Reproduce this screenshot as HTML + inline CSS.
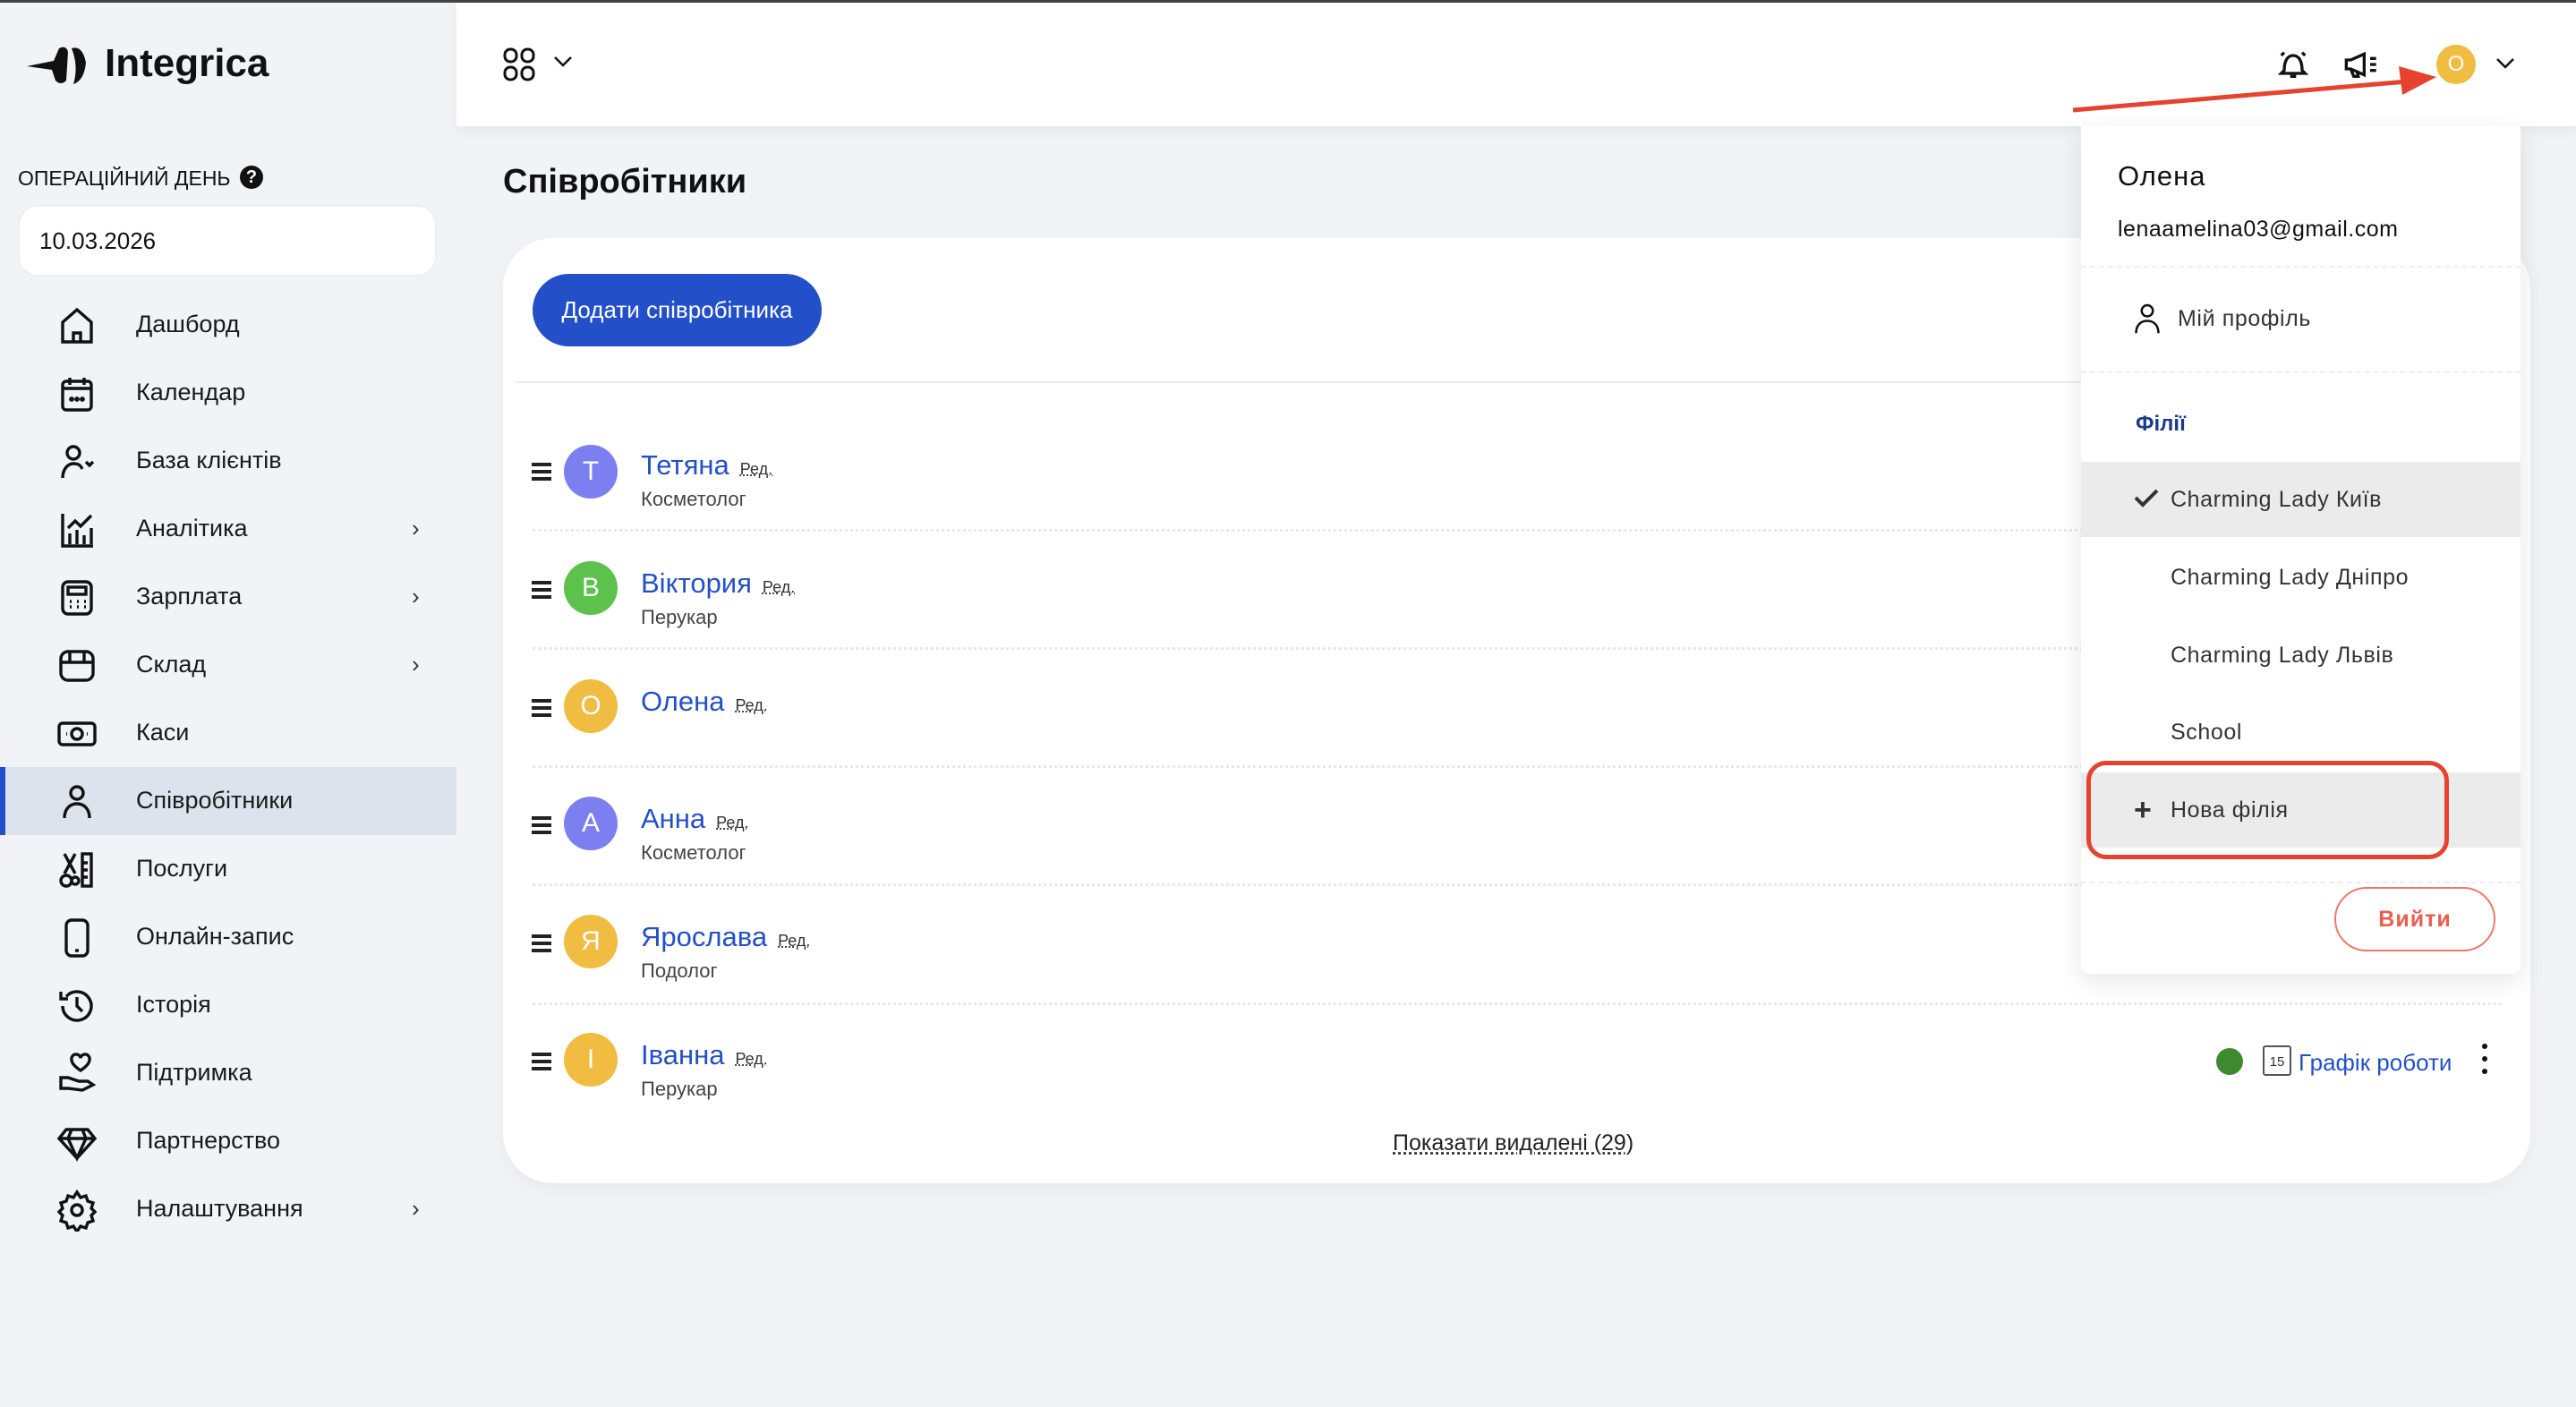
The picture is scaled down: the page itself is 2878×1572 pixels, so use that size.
<!DOCTYPE html>
<html><head><meta charset="utf-8"><style>
*{margin:0;padding:0;box-sizing:border-box}
body{width:2878px;height:1572px;background:#f2f3f7;font-family:"Liberation Sans",sans-serif;position:relative;overflow:hidden;color:#111}
.a{position:absolute;white-space:nowrap}
.topline{left:0;top:0;width:2878px;height:3px;background:#444}
.header{left:510px;top:3px;width:2368px;height:138px;background:#fff;box-shadow:0 6px 14px rgba(0,0,0,.05)}
.nav{font-size:27px;color:#1a1a1a}
.navi{left:62px;width:48px;height:48px}
.chev{left:460px;font-size:26px;color:#333}
.row-name{font-size:31px;color:#2350c8}
.red{font-size:18px;color:#333;text-decoration:underline dotted;margin-left:12px}
.sub{font-size:22px;color:#444}
.ham{left:594px;width:22px}
.ham i{display:block;height:4px;background:#222;margin:4px 0}
.av{width:60px;height:60px;border-radius:50%;color:#fff;font-size:30px;text-align:center;line-height:60px}
.div{left:595px;width:2200px;border-top:3px dotted #e6e8ee}
.dd{font-size:25px;color:#333;letter-spacing:0.6px}
</style></head><body>
<div class="a topline"></div>
<div class="a header"></div>

<!-- logo -->
<svg class="a" style="left:30px;top:50px" width="76" height="46" viewBox="0 0 76 46"><path d="M0 24 L30 18 L36 4 Q44 0 46 8 L44 40 Q38 46 32 40 L28 28 Z" fill="#111"/><path d="M50 4 Q62 0 66 20 Q64 40 52 44 Q58 24 50 4Z" fill="#111"/></svg>
<div class="a" style="left:117px;top:46px;font-size:44px;font-weight:bold;color:#111">Integrica</div>

<div class="a" style="left:20px;top:186px;font-size:23px;color:#111">ОПЕРАЦІЙНИЙ ДЕНЬ</div>
<div class="a" style="left:268px;top:185px;width:26px;height:26px;border-radius:50%;background:#111;color:#fff;font-size:20px;font-weight:bold;text-align:center;line-height:26px">?</div>
<div class="a" style="left:20px;top:229px;width:468px;height:80px;background:#fff;border-radius:22px;border:2px solid #eceef2;font-size:26px;line-height:76px;padding-left:22px">10.03.2026</div>

<div class="a" style="left:0;top:857px;width:510px;height:76px;background:#dde3ec"></div>
<div class="a" style="left:0;top:857px;width:6px;height:76px;background:#2350c8"></div>

<!-- nav -->
<svg class="a navi" style="top:340px" viewBox="0 0 24 24" fill="none" stroke="#111" stroke-width="1.7"><path d="M4 21V10L12 3l8 7v11z M10 21v-5h4v5"/></svg>
<div class="a nav" style="left:152px;top:347px">Дашборд</div>
<svg class="a navi" style="top:416px" viewBox="0 0 24 24" fill="none" stroke="#111" stroke-width="1.7"><rect x="4" y="5" width="16" height="16" rx="2"/><path d="M4 9h16M8 3v4M16 3v4"/><circle cx="9" cy="15" r=".6" fill="#111"/><circle cx="12" cy="15" r=".6" fill="#111"/><circle cx="15" cy="15" r=".6" fill="#111"/></svg>
<div class="a nav" style="left:152px;top:423px">Календар</div>
<svg class="a navi" style="top:492px" viewBox="0 0 24 24" fill="none" stroke="#111" stroke-width="1.7"><circle cx="10" cy="7" r="3.5"/><path d="M4 21c0-5 3-8 6-8s4 1 5 3"/><path d="M17 12l2 2 2-2" /></svg>
<div class="a nav" style="left:152px;top:499px">База клієнтів</div>
<svg class="a navi" style="top:568px" viewBox="0 0 24 24" fill="none" stroke="#111" stroke-width="1.7"><path d="M4 3v18h17M8 20v-6M12 20v-8M16 20v-5M20 20v-9M7 11l4-4 3 3 6-6"/></svg>
<div class="a nav" style="left:152px;top:575px">Аналітика</div><div class="a chev" style="top:575px">›</div>
<svg class="a navi" style="top:644px" viewBox="0 0 24 24" fill="none" stroke="#111" stroke-width="1.7"><rect x="4" y="3" width="16" height="18" rx="3"/><rect x="7" y="6" width="10" height="4"/><path d="M8 14h1M12 14h1M16 14h1M8 17h1M12 17h1M16 17h1"/></svg>
<div class="a nav" style="left:152px;top:651px">Зарплата</div><div class="a chev" style="top:651px">›</div>
<svg class="a navi" style="top:720px" viewBox="0 0 24 24" fill="none" stroke="#111" stroke-width="1.7"><rect x="3" y="4" width="18" height="16" rx="4"/><path d="M3 10h18M8 4v6M16 4v6"/></svg>
<div class="a nav" style="left:152px;top:727px">Склад</div><div class="a chev" style="top:727px">›</div>
<svg class="a navi" style="top:796px" viewBox="0 0 24 24" fill="none" stroke="#111" stroke-width="1.7"><rect x="2" y="6" width="20" height="12" rx="2"/><circle cx="12" cy="12" r="3"/><path d="M6 12h.5M17.5 12h.5"/></svg>
<div class="a nav" style="left:152px;top:803px">Каси</div>
<svg class="a navi" style="top:872px" viewBox="0 0 24 24" fill="none" stroke="#111" stroke-width="1.7"><circle cx="12" cy="7" r="3.5"/><path d="M5 21c0-5 3-8 7-8s7 3 7 8"/></svg>
<div class="a nav" style="left:152px;top:879px">Співробітники</div>
<svg class="a navi" style="top:948px" viewBox="0 0 24 24" fill="none" stroke="#111" stroke-width="1.7"><path d="M5 3l6 11M11 3L5 14"/><circle cx="6" cy="18" r="3"/><circle cx="11" cy="18" r="2"/><rect x="15" y="3" width="5" height="18"/><path d="M15 8h3M15 12h3M15 16h3"/></svg>
<div class="a nav" style="left:152px;top:955px">Послуги</div>
<svg class="a navi" style="top:1024px" viewBox="0 0 24 24" fill="none" stroke="#111" stroke-width="1.7"><rect x="6" y="2" width="12" height="20" rx="3"/><path d="M11 19h2"/></svg>
<div class="a nav" style="left:152px;top:1031px">Онлайн-запис</div>
<svg class="a navi" style="top:1100px" viewBox="0 0 24 24" fill="none" stroke="#111" stroke-width="1.7"><path d="M4 12a8 8 0 1 0 2-5.3M3 4v4h4M12 7v5l3 3"/></svg>
<div class="a nav" style="left:152px;top:1107px">Історія</div>
<svg class="a navi" style="top:1176px" viewBox="0 0 24 24" fill="none" stroke="#111" stroke-width="1.7"><path d="M3 14h4l6 2h5l3 2-6 3-8-1H3z"/><path d="M14 10c-3-2-5-4-5-6a2.5 2.5 0 0 1 5-1 2.5 2.5 0 0 1 5 1c0 2-2 4-5 6z"/></svg>
<div class="a nav" style="left:152px;top:1183px">Підтримка</div>
<svg class="a navi" style="top:1252px" viewBox="0 0 24 24" fill="none" stroke="#111" stroke-width="1.7"><path d="M6 5h12l4 5-10 11L2 10z M2 10h20M9 5l-2 5 5 11 5-11-2-5"/></svg>
<div class="a nav" style="left:152px;top:1259px">Партнерство</div>
<svg class="a navi" style="top:1328px" viewBox="0 0 24 24" fill="none" stroke="#111" stroke-width="1.7"><circle cx="12" cy="12" r="3"/><path d="M12 2l2 3 3-1 1 3 3 1-1 3 2 2-2 2 1 3-3 1-1 3-3-1-2 3-2-3-3 1-1-3-3-1 1-3-2-2 2-2-1-3 3-1 1-3 3 1z"/></svg>
<div class="a nav" style="left:152px;top:1335px">Налаштування</div><div class="a chev" style="top:1335px">›</div>

<!-- header icons -->
<svg class="a" style="left:562px;top:53px" width="36" height="38" viewBox="0 0 36 38" fill="none" stroke="#111" stroke-width="3"><rect x="2" y="2" width="13" height="14" rx="6"/><rect x="21" y="2" width="13" height="14" rx="6"/><rect x="2" y="22" width="13" height="14" rx="6"/><rect x="21" y="22" width="13" height="14" rx="6"/></svg>
<svg class="a" style="left:618px;top:62px" width="22" height="14" viewBox="0 0 22 14" fill="none" stroke="#111" stroke-width="2.5"><path d="M2 2l9 9 9-9"/></svg>
<svg class="a" style="left:2542px;top:52px" width="40" height="40" viewBox="0 0 24 24" fill="none" stroke="#111" stroke-width="2"><path d="M6 16c0-6 2-10 6-10s6 4 6 10l2 2H4z"/><path d="M10 20h4M4 6l2-2M20 6l-2-2"/></svg>
<svg class="a" style="left:2616px;top:52px" width="44" height="40" viewBox="0 0 26 24" fill="none" stroke="#111" stroke-width="2"><path d="M3 9v6h3l9 4V5L6 9z M6 15l2 5h3l-1-4"/><path d="M19 8h4M19 12h4M19 16h4"/></svg>
<div class="a" style="left:2722px;top:50px;width:44px;height:44px;border-radius:50%;background:#f0bc42;color:#fff;font-size:24px;text-align:center;line-height:44px">О</div>
<svg class="a" style="left:2788px;top:64px" width="22" height="14" viewBox="0 0 22 14" fill="none" stroke="#111" stroke-width="2.5"><path d="M2 2l9 9 9-9"/></svg>

<div class="a" style="left:562px;top:182px;font-size:38px;font-weight:bold">Співробітники</div>

<!-- card -->
<div class="a" style="left:562px;top:266px;width:2265px;height:1056px;background:#fff;border-radius:56px;box-shadow:0 8px 20px rgba(0,0,0,.04)"></div>
<div class="a" style="left:595px;top:306px;width:323px;height:81px;background:#2350c8;border-radius:41px;color:#fff;font-size:26px;text-align:center;line-height:81px">Додати співробітника</div>
<div class="a" style="left:575px;top:426px;width:2240px;border-top:2px solid #eceef2"></div>

<div class="a div" style="top:591px"></div>
<div class="a div" style="top:723px"></div>
<div class="a div" style="top:855px"></div>
<div class="a div" style="top:987px"></div>
<div class="a div" style="top:1120px"></div>

<!-- rows -->
<div class="a ham" style="top:513px"><i></i><i></i><i></i></div>
<div class="a av" style="left:630px;top:497px;background:#7b7ff0">Т</div>
<div class="a" style="left:716px;top:502px"><span class="row-name">Тетяна</span><span class="red">Ред.</span></div>
<div class="a sub" style="left:716px;top:545px">Косметолог</div>

<div class="a ham" style="top:645px"><i></i><i></i><i></i></div>
<div class="a av" style="left:630px;top:627px;background:#5cc24c">В</div>
<div class="a" style="left:716px;top:634px"><span class="row-name">Віктория</span><span class="red">Ред.</span></div>
<div class="a sub" style="left:716px;top:677px">Перукар</div>

<div class="a ham" style="top:777px"><i></i><i></i><i></i></div>
<div class="a av" style="left:630px;top:759px;background:#f0bc42">О</div>
<div class="a" style="left:716px;top:766px"><span class="row-name">Олена</span><span class="red">Ред.</span></div>

<div class="a ham" style="top:908px"><i></i><i></i><i></i></div>
<div class="a av" style="left:630px;top:890px;background:#7b7ff0">А</div>
<div class="a" style="left:716px;top:897px"><span class="row-name">Анна</span><span class="red">Ред.</span></div>
<div class="a sub" style="left:716px;top:940px">Косметолог</div>

<div class="a ham" style="top:1040px"><i></i><i></i><i></i></div>
<div class="a av" style="left:630px;top:1022px;background:#f0bc42">Я</div>
<div class="a" style="left:716px;top:1029px"><span class="row-name">Ярослава</span><span class="red">Ред.</span></div>
<div class="a sub" style="left:716px;top:1072px">Подолог</div>

<div class="a ham" style="top:1172px"><i></i><i></i><i></i></div>
<div class="a av" style="left:630px;top:1154px;background:#f0bc42">І</div>
<div class="a" style="left:716px;top:1161px"><span class="row-name">Іванна</span><span class="red">Ред.</span></div>
<div class="a sub" style="left:716px;top:1204px">Перукар</div>

<div class="a" style="left:2476px;top:1171px;width:30px;height:30px;border-radius:50%;background:#3f8a2e"></div>
<div class="a" style="left:2528px;top:1168px;width:32px;height:34px;border:2px solid #555;border-radius:3px;font-size:15px;text-align:center;line-height:34px;color:#333">15</div>
<div class="a" style="left:2568px;top:1172px;font-size:26px;color:#2350c8">Графік роботи</div>
<div class="a" style="left:2773px;top:1166px;width:6px"><i style="display:block;width:6px;height:6px;border-radius:50%;background:#111;margin-bottom:8px"></i><i style="display:block;width:6px;height:6px;border-radius:50%;background:#111;margin-bottom:8px"></i><i style="display:block;width:6px;height:6px;border-radius:50%;background:#111"></i></div>

<div class="a" style="left:1556px;top:1263px;font-size:25px;color:#222;text-decoration:underline dotted">Показати видалені (29)</div>

<!-- dropdown -->
<div class="a" style="left:2325px;top:141px;width:491px;height:947px;background:#fff;border-radius:0 0 10px 10px;box-shadow:0 8px 30px rgba(0,0,0,.1)"></div>
<div class="a" style="left:2366px;top:179px;font-size:31px;color:#111;letter-spacing:1px">Олена</div>
<div class="a" style="left:2366px;top:242px;font-size:25px;color:#111;letter-spacing:0.5px">lenaamelina03@gmail.com</div>
<div class="a" style="left:2325px;top:297px;width:491px;border-top:2px dashed #eee"></div>
<svg class="a" style="left:2384px;top:338px" width="30" height="36" viewBox="0 0 24 28" fill="none" stroke="#111" stroke-width="2"><circle cx="12" cy="7" r="5"/><path d="M2 27c0-7 4-11 10-11s10 4 10 11"/></svg>
<div class="a dd" style="left:2433px;top:342px">Мій профіль</div>
<div class="a" style="left:2325px;top:415px;width:491px;border-top:2px dashed #eee"></div>
<div class="a" style="left:2386px;top:460px;font-size:24px;font-weight:bold;color:#1a3a8f">Філії</div>
<div class="a" style="left:2325px;top:516px;width:491px;height:84px;background:#ebebeb"></div>
<svg class="a" style="left:2384px;top:545px" width="28" height="22" viewBox="0 0 28 22" fill="none" stroke="#333" stroke-width="4"><path d="M2 11l8 8L26 3"/></svg>
<div class="a dd" style="left:2425px;top:544px">Charming Lady Київ</div>
<div class="a dd" style="left:2425px;top:631px">Charming Lady Дніпро</div>
<div class="a dd" style="left:2425px;top:718px">Charming Lady Львів</div>
<div class="a dd" style="left:2425px;top:804px">School</div>
<div class="a" style="left:2325px;top:863px;width:491px;height:84px;background:#ebebeb"></div>
<div class="a" style="left:2384px;top:890px;font-size:34px;font-weight:bold;color:#333;line-height:30px">+</div>
<div class="a dd" style="left:2425px;top:891px">Нова філія</div>
<div class="a" style="left:2331px;top:850px;width:405px;height:110px;border:5px solid #e5432e;border-radius:22px"></div>
<div class="a" style="left:2325px;top:985px;width:491px;border-top:2px dashed #eee"></div>
<div class="a" style="left:2608px;top:991px;width:180px;height:72px;border:2px solid #ea7a6c;border-radius:36px;color:#e8604f;font-size:25px;font-weight:bold;text-align:center;line-height:68px;letter-spacing:1px">Вийти</div>

<!-- red arrow -->
<svg class="a" style="left:0;top:0" width="2878" height="200"><line x1="2316" y1="123" x2="2690" y2="91" stroke="#e5432e" stroke-width="5"/><path d="M2722 86 L2680 74 L2684 106 Z" fill="#e5432e"/></svg>
</body></html>
